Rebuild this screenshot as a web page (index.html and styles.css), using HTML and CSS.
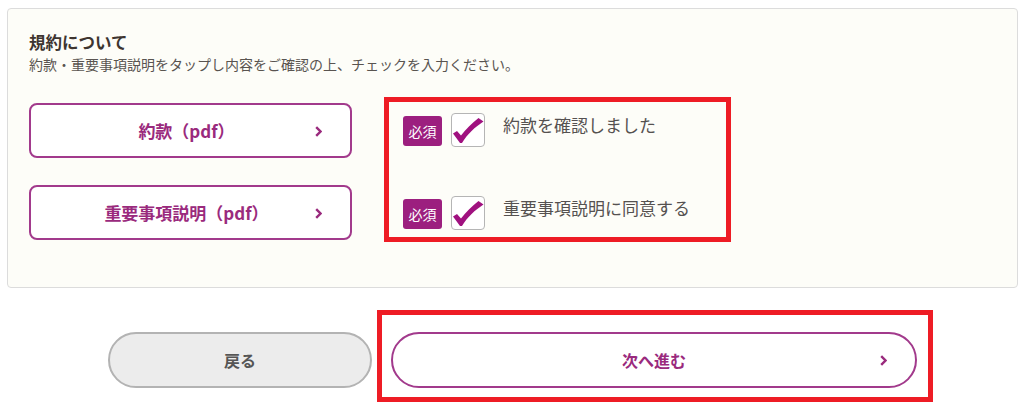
FILE: index.html
```html
<!DOCTYPE html>
<html lang="ja">

<head>
    <meta charset="UTF-8">
    <meta name="viewport" content="width=device-width, initial-scale=1.0">
    <title>規約について</title>
    <link rel="stylesheet" href="styles.css">
</head>

<body>
    <div class="panel">
        <h2 class="title">規約について</h2>
        <p class="lead">約款・重要事項説明をタップし内容をご確認の上、チェックを入力ください。</p>

        <div class="terms">
            <div class="docs">
                <a class="doc-btn" href="#">約款（pdf）
                    <svg class="arrow" width="7" height="11" viewBox="0 0 7 11"><polyline points="1.2,1.2 5.5,5.5 1.2,9.8" /></svg>
                </a>
                <a class="doc-btn" href="#">重要事項説明（pdf）
                    <svg class="arrow" width="7" height="11" viewBox="0 0 7 11"><polyline points="1.2,1.2 5.5,5.5 1.2,9.8" /></svg>
                </a>
            </div>

            <div class="checks mark">
                <label class="check-row">
                    <span class="badge">必須</span>
                    <span class="box">
                        <svg width="32" height="32" viewBox="0 0 32 32"><path d="M1 19.5 L5 17 L9 21.5 C14 15 20 9 26.5 4 L31.5 7.5 C23 13 15.5 20 10 29 L8 29 Z" /></svg>
                    </span>
                    <span class="check-text">約款を確認しました</span>
                </label>
                <label class="check-row">
                    <span class="badge">必須</span>
                    <span class="box">
                        <svg width="32" height="32" viewBox="0 0 32 32"><path d="M1 19.5 L5 17 L9 21.5 C14 15 20 9 26.5 4 L31.5 7.5 C23 13 15.5 20 10 29 L8 29 Z" /></svg>
                    </span>
                    <span class="check-text">重要事項説明に同意する</span>
                </label>
            </div>
        </div>
    </div>

    <div class="actions">
        <button class="back">戻る</button>
        <div class="mark next-wrap">
            <button class="next">次へ進む
                <svg class="arrow" width="7" height="11" viewBox="0 0 7 11"><polyline points="1.2,1.2 5.5,5.5 1.2,9.8" /></svg>
            </button>
        </div>
    </div>
</body>

</html>
```

FILE: styles.css
```css
body {
    margin: 0;
    background-color: #fff;
    font-family: "Noto Sans CJK JP", "Noto Sans", sans-serif;
}

/* panel */
.panel {
    box-sizing: border-box;
    height: 280px;
    margin: 8px 12px 0 7px;
    padding: 22px 20px 0 21px;
    background-color: #fdfdf8;
    border: 1px solid #dcdcdc;
    border-radius: 4px;
}

.title {
    margin: 0;
    font-size: 16.5px;
    line-height: 22px;
    font-weight: bold;
    color: #3e3530;
}

.lead {
    margin: 0;
    font-size: 14px;
    line-height: 22px;
    color: #595450;
}

.terms {
    display: flex;
    align-items: flex-start;
    gap: 32px;
    margin-top: 22px;
}

.docs {
    display: flex;
    flex-direction: column;
    gap: 27px;
    width: 323px;
    margin-top: 6px;
}

.doc-btn {
    position: relative;
    box-sizing: border-box;
    height: 55px;
    display: flex;
    align-items: center;
    justify-content: center;
    padding-right: 8px;
    border: 2px solid #a23a8c;
    border-radius: 8px;
    background-color: #fff;
    color: #9a2a7d;
    font-size: 17px;
    font-weight: bold;
    text-decoration: none;
}

.arrow {
    position: absolute;
    right: 28px;
    top: 50%;
    margin-top: -5px;
    fill: none;
    stroke: #9a2a7d;
    stroke-width: 2.4;
}

/* red highlight frame */
.mark {
    box-sizing: border-box;
    border: 5px solid #ee1c25;
}

.checks {
    width: 347px;
    height: 145px;
    padding: 11px 0 0 14px;
    display: flex;
    flex-direction: column;
    gap: 49px;
}

.check-row {
    display: flex;
    align-items: flex-start;
}

.badge {
    width: 39px;
    height: 30px;
    margin-top: 3px;
    display: flex;
    align-items: center;
    justify-content: center;
    background-color: #9c1f7f;
    border-radius: 3px;
    color: #fff;
    font-size: 14px;
}

.box {
    box-sizing: border-box;
    width: 34px;
    height: 34px;
    margin-left: 9px;
    border: 1px solid #b5b5b5;
    border-radius: 4px;
    background-color: #fff;
}

.box svg {
    display: block;
    fill: #a0117f;
}

.check-text {
    margin-left: 18px;
    font-size: 17px;
    line-height: 24px;
    color: #555150;
}

/* bottom buttons */
.actions {
    display: flex;
    align-items: flex-start;
    gap: 5px;
    margin: 22px 0 0 108px;
}

.back,
.next {
    box-sizing: border-box;
    height: 56px;
    border-radius: 28px;
    font-family: inherit;
    font-size: 16px;
    font-weight: bold;
}

.back {
    width: 264px;
    margin-top: 22px;
    background-color: #ececec;
    border: 2px solid #b3b3b3;
    color: #555;
}

.next-wrap {
    width: 556px;
    height: 92px;
    padding: 17px 0 0 9px;
}

.next {
    position: relative;
    width: 526px;
    background-color: #fff;
    border: 2px solid #a23a8c;
    color: #9a2a7d;
}
```
